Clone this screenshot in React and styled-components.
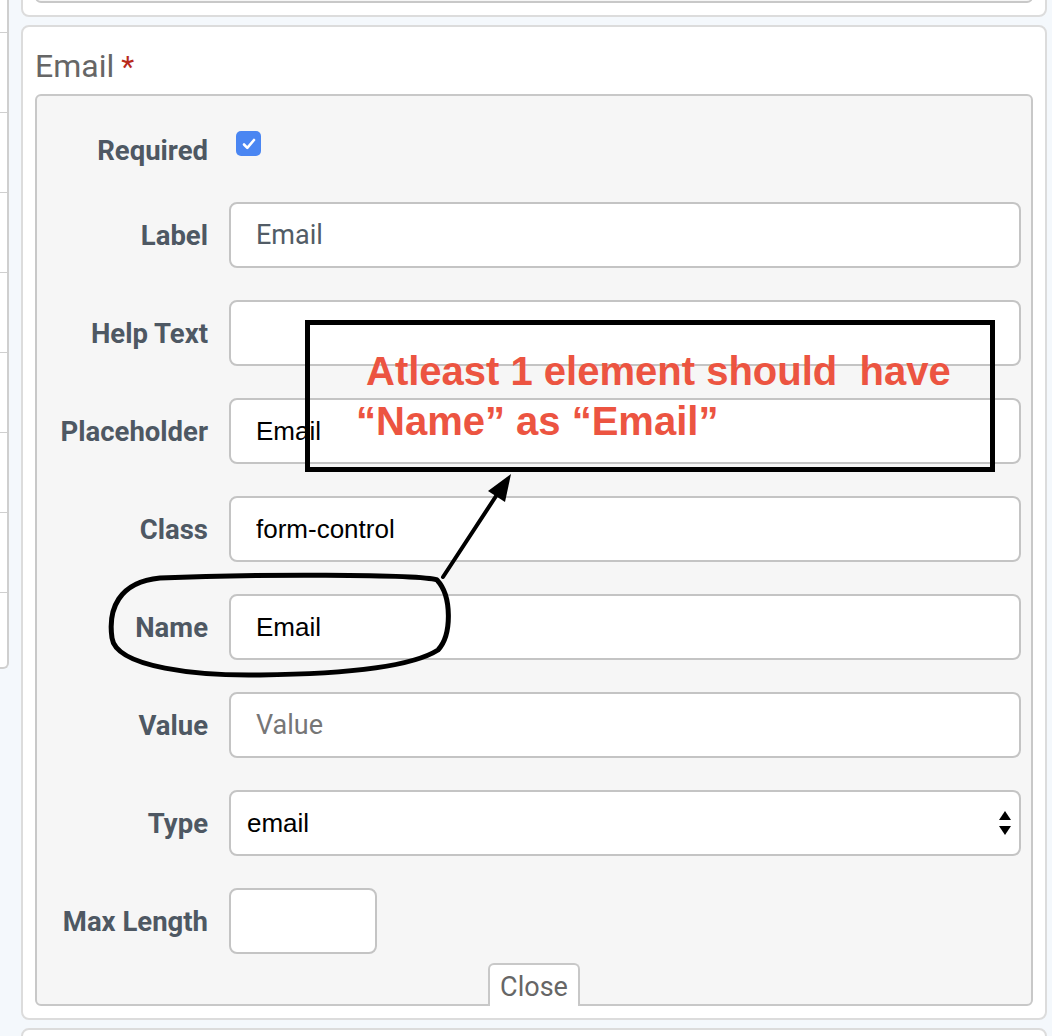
import React from "react";
import styled, { createGlobalStyle } from "styled-components";

const GlobalStyle = createGlobalStyle`
  html, body {
    margin: 0;
    padding: 0;
    background: #f4f8fc;
  }
  body {
    font-family: Roboto, "Liberation Sans", sans-serif;
    overflow: hidden;
  }
`;

const Page = styled.div`
  position: relative;
  display: flex;
  align-items: flex-start;
  gap: 12px;
  width: 1052px;
  height: 1036px;
  overflow: hidden;
`;

const Sidebar = styled.div`
  flex: none;
  width: 7px;
  margin-top: -47px;
  background: #fff;
  border-right: 2px solid #cfcfcf;
  border-bottom: 2px solid #cfcfcf;
  border-bottom-right-radius: 6px;
  display: flex;
  flex-direction: column;
`;

const SideRow = styled.div`
  flex: none;
  height: ${(p) => (p.$last ? "74px" : "79px")};
  border-bottom: ${(p) => (p.$last ? "none" : "1px solid #cfcfcf")};
`;

const Column = styled.div`
  flex: none;
  width: 1026px;
  margin-top: -43px;
  display: flex;
  flex-direction: column;
  gap: 8px;
`;

const Card = styled.div`
  flex: none;
  position: relative;
  background: #fff;
  border: 2px solid #dcdcdc;
  border-radius: 8px;
  padding: 0 12px 12px;
  height: ${(p) => (p.$height ? `${p.$height}px` : "auto")};
  box-sizing: border-box;
  display: flex;
  flex-direction: column;
`;

const Heading = styled.h2`
  margin: 0 0 8px;
  padding-top: 20px;
  font-family: Roboto, sans-serif;
  font-weight: 400;
  font-size: 32px;
  line-height: 38px;
  color: #666;
`;

const Star = styled.span`
  color: #b8291b;
  margin-left: 7px;
  font-size: 30px;
`;

const Panel = styled.div`
  flex: ${(p) => (p.$fill ? 1 : "none")};
  background: #f6f6f6;
  border: 2px solid #c8c8c8;
  border-radius: 6px;
  padding: ${(p) => (p.$fill ? "0" : "34px 10px 0 0")};
  display: flex;
  flex-direction: column;
`;

const Fields = styled.div`
  display: flex;
  flex-direction: column;
  gap: 32px;
`;

const Row = styled.div`
  display: flex;
  align-items: center;
  gap: 21px;
  height: ${(p) => (p.$short ? "40px" : "66px")};
`;

const Label = styled.label`
  flex: none;
  width: 171px;
  text-align: right;
  font-family: Roboto, sans-serif;
  font-weight: 700;
  font-size: 27.5px;
  color: #4e5863;
`;

const Check = styled.span`
  align-self: flex-start;
  margin: 1px 0 0 7px;
  width: 25px;
  height: 25px;
  border-radius: 5px;
  background: #4a86f2;
  display: flex;
  align-items: center;
  justify-content: center;
`;

const Input = styled.input`
  box-sizing: border-box;
  height: 66px;
  flex: ${(p) => (p.$width ? "none" : 1)};
  width: ${(p) => (p.$width ? `${p.$width}px` : "auto")};
  min-width: 0;
  border: 2px solid #c4c4c4;
  border-radius: 8px;
  background: #fff;
  padding: 0 24px 0 25px;
  font-family: ${(p) => (p.$soft ? "Roboto" : '"Liberation Sans"')}, sans-serif;
  font-size: ${(p) => (p.$soft ? "27px" : "26px")};
  color: ${(p) => (p.$soft ? "#525c66" : "#000")};
  outline: none;
  &::placeholder {
    font-family: Roboto, sans-serif;
    font-size: 27px;
    color: #767676;
  }
`;

const SelectWrap = styled.div`
  position: relative;
  flex: 1;
  height: 66px;
`;

const Select = styled.select`
  appearance: none;
  box-sizing: border-box;
  width: 100%;
  height: 66px;
  border: 2px solid #c4c4c4;
  border-radius: 8px;
  background: #fff;
  padding: 0 40px 0 16px;
  font-family: "Liberation Sans", sans-serif;
  font-size: 26px;
  color: #000;
  outline: none;
`;

const Arrows = styled.svg`
  position: absolute;
  right: 9px;
  top: 20px;
  pointer-events: none;
`;

const CloseTab = styled.button`
  align-self: center;
  margin: 9px 0 -2px 10px;
  height: 43px;
  width: 92px;
  box-sizing: border-box;
  background: #fff;
  border: 2px solid #c8c8c8;
  border-bottom: none;
  border-radius: 6px 6px 0 0;
  font-family: Roboto, sans-serif;
  font-size: 27px;
  color: #666;
  padding: 2px 0 0;
`;

const Note = styled.div`
  position: absolute;
  left: 305px;
  top: 320px;
  width: 690px;
  height: 152px;
  box-sizing: border-box;
  border: 5px solid #000;
  padding: 21px 0 0 46px;
  font-family: "Liberation Sans", Arial, sans-serif;
  font-weight: 700;
  font-size: 40px;
  line-height: 50px;
  color: #ec5441;
  white-space: pre;
  pointer-events: none;
`;

const NoteLine = styled.div`
  margin-left: ${(p) => p.$indent || 0}px;
`;

const Ink = styled.svg`
  position: absolute;
  left: 0;
  top: 0;
  pointer-events: none;
`;

const fields = [
  { label: "Label", value: "Email", soft: true },
  { label: "Help Text", value: "" },
  { label: "Placeholder", value: "Email" },
  { label: "Class", value: "form-control" },
  { label: "Name", value: "Email" },
  { label: "Value", placeholder: "Value" },
];

export default function App() {
  return (
    <>
      <GlobalStyle />
      <Page>
        <Sidebar>
          {Array.from({ length: 9 }).map((_, i) => (
            <SideRow key={i} $last={i === 8} />
          ))}
        </Sidebar>
        <Column>
          <Card $height={60}>
            <Panel $fill />
          </Card>
          <Card>
            <Heading>
              Email<Star>*</Star>
            </Heading>
            <Panel>
              <Fields>
                <Row $short>
                  <Label>Required</Label>
                  <Check>
                    <svg width="18" height="18" viewBox="0 0 18 18">
                      <path d="M4 9.5l3.3 3.4L14 5" fill="none" stroke="#fff" strokeWidth="2.6" strokeLinecap="round" strokeLinejoin="round" />
                    </svg>
                  </Check>
                </Row>
                {fields.map((f) => (
                  <Row key={f.label}>
                    <Label>{f.label}</Label>
                    <Input
                      defaultValue={f.value}
                      placeholder={f.placeholder}
                      $soft={f.soft}
                    />
                  </Row>
                ))}
                <Row>
                  <Label>Type</Label>
                  <SelectWrap>
                    <Select defaultValue="email">
                      <option value="email">email</option>
                      <option value="text">text</option>
                    </Select>
                    <Arrows width="14" height="26" viewBox="0 0 14 26">
                      <path d="M7 1L13 10H1Z" fill="#000" />
                      <path d="M7 25L13 16H1Z" fill="#000" />
                    </Arrows>
                  </SelectWrap>
                </Row>
                <Row>
                  <Label>Max Length</Label>
                  <Input $width={148} />
                </Row>
              </Fields>
              <CloseTab>Close</CloseTab>
            </Panel>
          </Card>
          <Card $height={80} />
        </Column>

        <Note>
          <NoteLine $indent={10}>Atleast 1 element should  have</NoteLine>
          <NoteLine>“Name” as “Email”</NoteLine>
        </Note>

        <Ink width="1052" height="1036" viewBox="0 0 1052 1036">
          <path
            d="M437 580 C420 574, 250 574, 160 578 C118 582, 108 610, 112 638 C116 668, 200 676, 260 675 C340 674, 410 668, 438 650 C452 635, 452 596, 437 580"
            fill="none"
            stroke="#000"
            strokeWidth="5"
            strokeLinecap="round"
          />
          <line x1="443" y1="577" x2="500" y2="490" stroke="#000" strokeWidth="4" strokeLinecap="round" />
          <path d="M511 474 L505 502 L488 491 Z" fill="#000" />
        </Ink>
      </Page>
    </>
  );
}
